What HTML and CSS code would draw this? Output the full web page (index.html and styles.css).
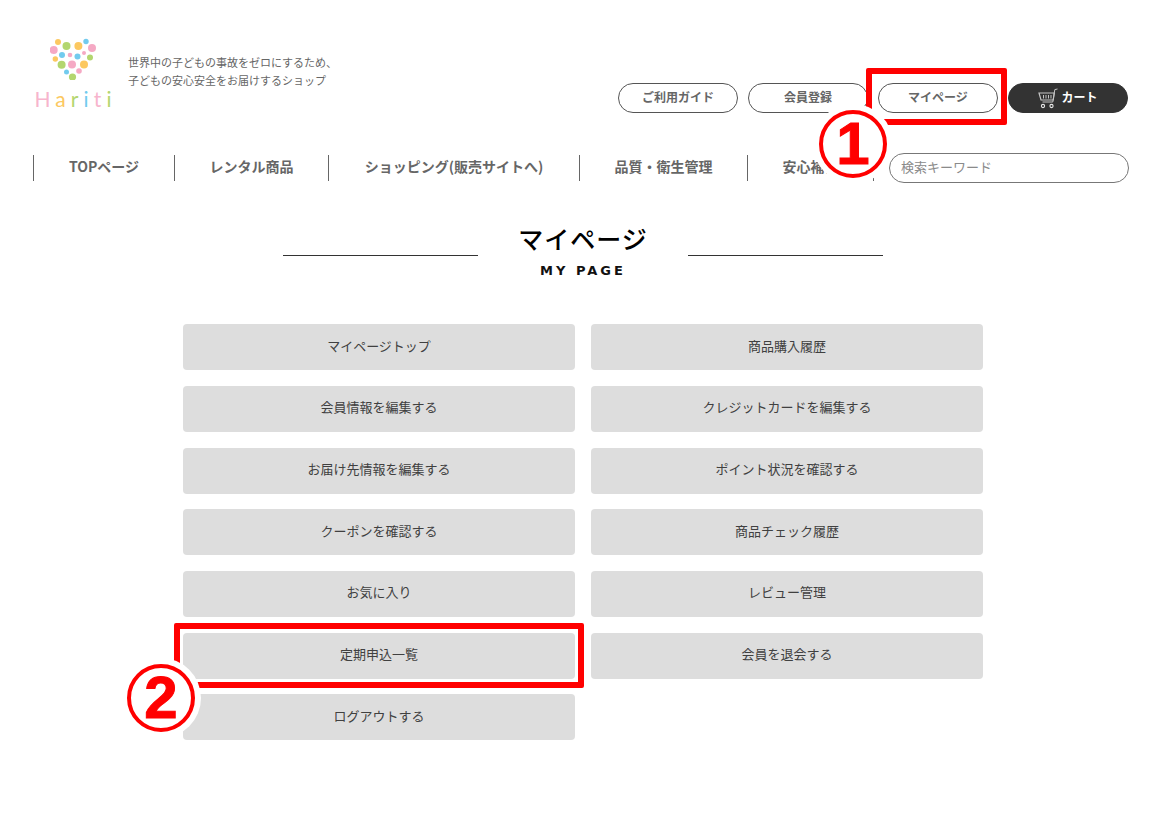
FILE: index.html
```html
<!DOCTYPE html>
<html lang="ja">
<head>
<meta charset="utf-8">
<title>マイページ</title>
<link rel="stylesheet" href="styles.css">
</head>
<body>
<div class="page">
  <header class="header">
    <a class="logo">
      <svg class="logo-mark" width="46" height="42" viewBox="50 38 46 42" aria-hidden="true">
        <g fill="#f5a9c4">
          <circle cx="92" cy="48" r="4"/><circle cx="53.7" cy="50" r="4"/><circle cx="70" cy="55" r="2.3"/><circle cx="84" cy="53" r="2"/><circle cx="72" cy="64.5" r="4"/><circle cx="79" cy="71" r="2.8"/>
        </g>
        <g fill="#fcc860">
          <circle cx="58" cy="42" r="3"/><circle cx="78.4" cy="46" r="4"/><circle cx="55.3" cy="59" r="2.7"/><circle cx="84" cy="64.5" r="4"/>
        </g>
        <g fill="#b3d66f">
          <circle cx="66.5" cy="46" r="4"/><circle cx="90" cy="57.5" r="3"/><circle cx="61.6" cy="64.7" r="4"/><circle cx="72.5" cy="77" r="3.6"/>
        </g>
        <g fill="#72cbee">
          <circle cx="86" cy="41.5" r="2.7"/><circle cx="62" cy="55" r="3"/><circle cx="77.5" cy="56.5" r="3"/><circle cx="66.5" cy="72" r="2.5"/>
        </g>
      </svg>
      <span class="logo-name"><span class="c-pink">H</span><span class="c-yellow">a</span><span class="c-green">r</span><span class="c-blue">i</span><span class="c-pink">t</span><span class="c-green">i</span></span>
    </a>
    <p class="tagline">世界中の子どもの事故をゼロにするため、<br>子どもの安心安全をお届けするショップ</p>
    <div class="actions">
      <a class="pill">ご利用ガイド</a>
      <a class="pill">会員登録</a>
      <a class="pill">マイページ</a>
      <a class="pill pill-dark">
        <svg class="cart" width="20" height="21" viewBox="0 0 20 21" fill="none" aria-hidden="true">
          <path d="M19.5 1 L16.8 1.6 L14.8 14 H4.5" stroke="#c4c4c4" stroke-width="1"/>
          <path d="M1 5 H16.3 L15.2 12 H3 Z" stroke="#c4c4c4" stroke-width="1.2"/>
          <path d="M5.5 7v3.5M8 7v3.5M10.5 7v3.5M13 7v3.5" stroke="#c4c4c4" stroke-width="1"/>
          <circle cx="5" cy="18" r="1.6" stroke="#e8e8e8" stroke-width="1.1"/>
          <circle cx="13.5" cy="18" r="1.6" stroke="#e8e8e8" stroke-width="1.1"/>
        </svg>
        <span>カート</span>
      </a>
    </div>
  </header>

  <div class="navbar">
    <nav class="nav">
      <a class="nav-item">TOPページ</a>
      <a class="nav-item">レンタル商品</a>
      <a class="nav-item">ショッピング(販売サイトへ)</a>
      <a class="nav-item">品質・衛生管理</a>
      <a class="nav-item">安心補償</a>
    </nav>
    <input class="search" type="text" placeholder="検索キーワード">
  </div>

  <main class="main">
    <div class="title">
      <div class="title-rule"></div>
      <div class="title-text">
        <h1>マイページ</h1>
        <p>MY PAGE</p>
      </div>
      <div class="title-rule"></div>
    </div>

    <div class="menu">
      <a class="menu-item">マイページトップ</a>
      <a class="menu-item">商品購入履歴</a>
      <a class="menu-item">会員情報を編集する</a>
      <a class="menu-item">クレジットカードを編集する</a>
      <a class="menu-item">お届け先情報を編集する</a>
      <a class="menu-item">ポイント状況を確認する</a>
      <a class="menu-item">クーポンを確認する</a>
      <a class="menu-item">商品チェック履歴</a>
      <a class="menu-item">お気に入り</a>
      <a class="menu-item">レビュー管理</a>
      <a class="menu-item">定期申込一覧</a>
      <a class="menu-item">会員を退会する</a>
      <a class="menu-item">ログアウトする</a>
    </div>
  </main>

  <div class="mark-box mark-box-1"></div>
  <div class="mark-num mark-num-1">1</div>
  <div class="mark-box mark-box-2"></div>
  <div class="mark-num mark-num-2">2</div>
</div>
</body>
</html>
```
FILE: styles.css
```css
* { box-sizing: border-box; }
html, body { margin: 0; padding: 0; background: #fff; }
body {
  font-family: "Noto Sans CJK JP", "Open Sans", sans-serif;
  color: #444;
  overflow: hidden;
}
a { color: inherit; text-decoration: none; }
p, h1 { margin: 0; }

.page { position: relative; width: 1160px; height: 820px; }

.header {
  display: flex;
  align-items: flex-start;
  height: 153px;
  padding: 38px 32px 0 34px;
}
.logo { display: flex; flex-direction: column; align-items: center; width: 80px; }
.logo-mark { display: block; margin-right: 2px; }
.logo-name {
  font-family: "Lato", "Open Sans", sans-serif;
  font-weight: 400;
  font-size: 21px;
  line-height: 24px;
  letter-spacing: 5.1px;
  margin-top: 7px;
  margin-left: 3px;
  white-space: nowrap;
}
.c-pink { color: #f7b5cd; }
.c-yellow { color: #fcc860; }
.c-green { color: #b3d66f; }
.c-blue { color: #72cbee; }

.tagline {
  font-size: 11px;
  line-height: 18px;
  color: #666;
  margin: 15px 0 0 14px;
  white-space: nowrap;
}
.actions {
  margin-left: auto;
  margin-top: 45px;
  display: flex;
  gap: 10px;
}
.pill {
  display: flex;
  align-items: center;
  justify-content: center;
  width: 120px;
  height: 30px;
  padding-bottom: 3px;
  border: 1px solid #555;
  border-radius: 15px;
  font-size: 12px;
  font-weight: 700;
  color: #666;
  background: #fff;
}
.pill-dark { background: #333; border-color: #333; color: #fff; gap: 3px; }
.cart { display: block; margin-top: 3px; }

.navbar {
  display: flex;
  align-items: center;
  height: 30px;
  padding: 0 31px 0 33px;
}
.nav {
  display: grid;
  grid-template-columns: 141px 154px 251px 168px 126px;
  height: 26px;
  border-right: 1px solid #666;
}
.nav-item {
  display: flex;
  align-items: center;
  justify-content: center;
  padding-bottom: 4px;
  border-left: 1px solid #666;
  font-size: 14px;
  font-weight: 700;
  color: #666;
  white-space: nowrap;
}
.search {
  width: 240px;
  height: 30px;
  margin-left: 15px;
  padding: 0 11px 3px;
  border: 1px solid #777;
  border-radius: 15px;
  font-family: inherit;
  font-size: 13px;
  background: #fff;
  outline: none;
}
.search::placeholder { color: #8a8a8a; opacity: 1; }

.main { padding-top: 37px; }
.title { display: flex; justify-content: center; align-items: flex-start; margin-left: 6px; }
.title-rule { width: 195px; height: 1px; background: #333; margin-top: 35px; }
.title-text { width: 210px; text-align: center; }
.title-text h1 {
  font-size: 25px;
  font-weight: 500;
  line-height: 36px;
  letter-spacing: 1px;
  color: #000;
}
.title-text p {
  font-family: "DejaVu Sans", sans-serif;
  font-size: 13px;
  font-weight: 700;
  line-height: 18px;
  letter-spacing: 3px;
  color: #111;
  margin-top: 6px;
}

.menu {
  display: grid;
  grid-template-columns: 392px 392px;
  grid-auto-rows: 46px;
  column-gap: 16px;
  row-gap: 15.67px;
  justify-content: start;
  margin: 44.3px 0 0 183px;
}
.menu-item {
  display: flex;
  align-items: center;
  justify-content: center;
  padding-bottom: 4px;
  background: #ddd;
  border-radius: 4px;
  font-size: 13px;
  color: #404040;
}

.mark-box { position: absolute; border: 6px solid #f00; border-radius: 2px; }
.mark-box-1 { left: 866px; top: 68px; width: 141px; height: 57px; }
.mark-box-2 { left: 174px; top: 623px; width: 410px; height: 65px; }
.mark-num {
  position: absolute;
  width: 68px;
  height: 68px;
  display: flex;
  align-items: center;
  justify-content: center;
  border: 4px solid #f00;
  border-radius: 50%;
  background: #fff;
  box-shadow: 0 0 0 6px #fff;
  font-family: "Liberation Sans", sans-serif;
  font-size: 60px;
  font-weight: 700;
  line-height: 1;
  color: #f00;
  -webkit-text-stroke: 1px #f00;
}
.mark-num-1 { left: 819px; top: 110px; }
.mark-num-2 { left: 127px; top: 664px; }
```
